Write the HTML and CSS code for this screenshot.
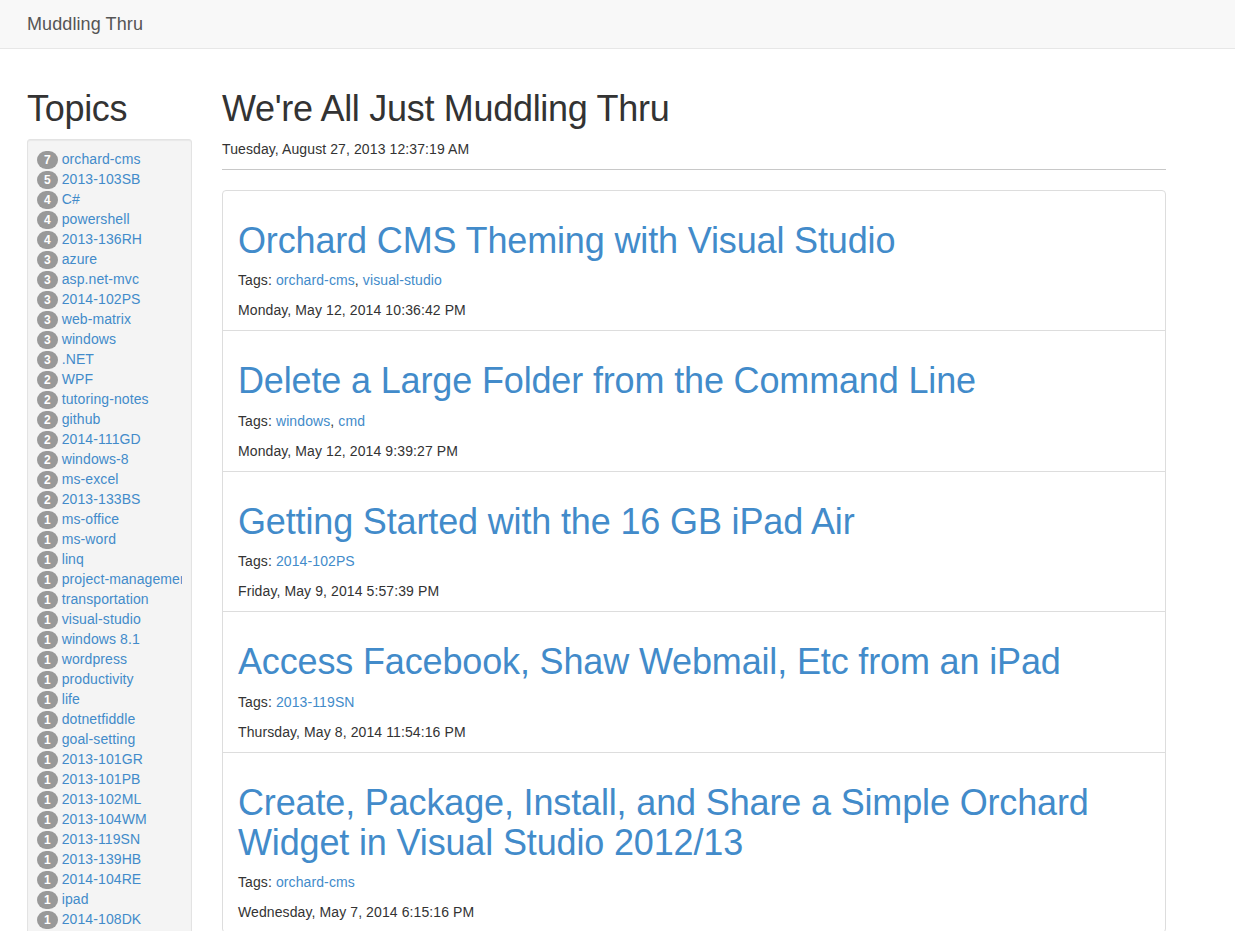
FILE: index.html
```html
<!DOCTYPE html>
<html lang="en">
<head>
<meta charset="utf-8">
<title>Muddling Thru</title>
<link rel="stylesheet" href="styles.css">
</head>
<body>
<nav class="navbar">
  <a class="brand" href="#">Muddling Thru</a>
</nav>
<div class="page">
  <aside class="sidebar">
    <h1 class="heading">Topics</h1>
    <div class="well">
      <ul class="topics">
        <li><span class="badge">7</span> <a href="#">orchard-cms</a></li>
        <li><span class="badge">5</span> <a href="#">2013-103SB</a></li>
        <li><span class="badge">4</span> <a href="#">C#</a></li>
        <li><span class="badge">4</span> <a href="#">powershell</a></li>
        <li><span class="badge">4</span> <a href="#">2013-136RH</a></li>
        <li><span class="badge">3</span> <a href="#">azure</a></li>
        <li><span class="badge">3</span> <a href="#">asp.net-mvc</a></li>
        <li><span class="badge">3</span> <a href="#">2014-102PS</a></li>
        <li><span class="badge">3</span> <a href="#">web-matrix</a></li>
        <li><span class="badge">3</span> <a href="#">windows</a></li>
        <li><span class="badge">3</span> <a href="#">.NET</a></li>
        <li><span class="badge">2</span> <a href="#">WPF</a></li>
        <li><span class="badge">2</span> <a href="#">tutoring-notes</a></li>
        <li><span class="badge">2</span> <a href="#">github</a></li>
        <li><span class="badge">2</span> <a href="#">2014-111GD</a></li>
        <li><span class="badge">2</span> <a href="#">windows-8</a></li>
        <li><span class="badge">2</span> <a href="#">ms-excel</a></li>
        <li><span class="badge">2</span> <a href="#">2013-133BS</a></li>
        <li><span class="badge">1</span> <a href="#">ms-office</a></li>
        <li><span class="badge">1</span> <a href="#">ms-word</a></li>
        <li><span class="badge">1</span> <a href="#">linq</a></li>
        <li><span class="badge">1</span> <a href="#">project-management</a></li>
        <li><span class="badge">1</span> <a href="#">transportation</a></li>
        <li><span class="badge">1</span> <a href="#">visual-studio</a></li>
        <li><span class="badge">1</span> <a href="#">windows 8.1</a></li>
        <li><span class="badge">1</span> <a href="#">wordpress</a></li>
        <li><span class="badge">1</span> <a href="#">productivity</a></li>
        <li><span class="badge">1</span> <a href="#">life</a></li>
        <li><span class="badge">1</span> <a href="#">dotnetfiddle</a></li>
        <li><span class="badge">1</span> <a href="#">goal-setting</a></li>
        <li><span class="badge">1</span> <a href="#">2013-101GR</a></li>
        <li><span class="badge">1</span> <a href="#">2013-101PB</a></li>
        <li><span class="badge">1</span> <a href="#">2013-102ML</a></li>
        <li><span class="badge">1</span> <a href="#">2013-104WM</a></li>
        <li><span class="badge">1</span> <a href="#">2013-119SN</a></li>
        <li><span class="badge">1</span> <a href="#">2013-139HB</a></li>
        <li><span class="badge">1</span> <a href="#">2014-104RE</a></li>
        <li><span class="badge">1</span> <a href="#">ipad</a></li>
        <li><span class="badge">1</span> <a href="#">2014-108DK</a></li>
      </ul>
    </div>
  </aside>
  <main class="main">
    <h1 class="heading">We're All Just Muddling Thru</h1>
    <p class="meta">Tuesday, August 27, 2013 12:37:19 AM</p>
    <hr class="rule">
    <div class="panel">
      <article class="post">
        <h2 class="post-title"><a href="#">Orchard CMS Theming with Visual Studio</a></h2>
        <p class="meta">Tags: <a href="#">orchard-cms</a>, <a href="#">visual-studio</a></p>
        <p class="meta">Monday, May 12, 2014 10:36:42 PM</p>
      </article>
      <article class="post">
        <h2 class="post-title"><a href="#">Delete a Large Folder from the Command Line</a></h2>
        <p class="meta">Tags: <a href="#">windows</a>, <a href="#">cmd</a></p>
        <p class="meta">Monday, May 12, 2014 9:39:27 PM</p>
      </article>
      <article class="post">
        <h2 class="post-title"><a href="#">Getting Started with the 16 GB iPad Air</a></h2>
        <p class="meta">Tags: <a href="#">2014-102PS</a></p>
        <p class="meta">Friday, May 9, 2014 5:57:39 PM</p>
      </article>
      <article class="post">
        <h2 class="post-title"><a href="#">Access Facebook, Shaw Webmail, Etc from an iPad</a></h2>
        <p class="meta">Tags: <a href="#">2013-119SN</a></p>
        <p class="meta">Thursday, May 8, 2014 11:54:16 PM</p>
      </article>
      <article class="post">
        <h2 class="post-title"><a href="#">Create, Package, Install, and Share a Simple Orchard Widget in Visual Studio 2012/13</a></h2>
        <p class="meta">Tags: <a href="#">orchard-cms</a></p>
        <p class="meta">Wednesday, May 7, 2014 6:15:16 PM</p>
      </article>
    </div>
  </main>
</div>
</body>
</html>
```

FILE: styles.css
```css
* { box-sizing: border-box; }

html, body {
  margin: 0;
  padding: 0;
}

body {
  font-family: "Liberation Sans", Arial, sans-serif;
  font-size: 14px;
  line-height: 20px;
  letter-spacing: 0.1px;
  color: #333;
  background: #fff;
}

a {
  color: #428bca;
  text-decoration: none;
}

.navbar {
  height: 49px;
  background: #f8f8f8;
  border-bottom: 1px solid #e7e7e7;
  display: flex;
  align-items: center;
  padding-left: 27px;
}

.brand {
  color: #555;
  font-size: 18px;
  line-height: 20px;
}

.page {
  display: flex;
  gap: 30px;
  padding: 20px 0 0 27px;
}

.sidebar {
  width: 165px;
  flex: none;
}

.main {
  width: 944px;
  flex: none;
}

.heading {
  font-size: 36px;
  font-weight: 500;
  line-height: 1.1;
  letter-spacing: -0.3px;
  margin: 20px 0 10px;
  color: #333;
}

.well {
  background: #f4f4f4;
  border: 1px solid #e3e3e3;
  border-radius: 3px;
  box-shadow: inset 0 1px 1px rgba(0, 0, 0, 0.05);
  padding: 9px;
}

.topics {
  list-style: none;
  margin: 0;
  padding: 0;
}

.topics li {
  white-space: nowrap;
  overflow: hidden;
  height: 20px;
}

.badge {
  display: inline-block;
  min-width: 10px;
  padding: 3px 7px;
  font-size: 12px;
  font-weight: bold;
  line-height: 1;
  letter-spacing: 0;
  color: #fff;
  text-align: center;
  vertical-align: baseline;
  background: #999;
  border-radius: 10px;
}

.meta {
  margin: 0 0 10px;
}

.rule {
  border: 0;
  border-top: 1px solid #c8c8c8;
  margin: 0 0 20px;
  padding: 0;
  height: 0;
}

.panel {
  border: 1px solid #ddd;
  border-radius: 4px;
  background: #fff;
}

.post {
  padding: 10px 15px 0;
  border-top: 1px solid #ddd;
}

.post:first-child {
  border-top: 0;
}

.post-title {
  font-size: 36px;
  font-weight: 500;
  line-height: 1.1;
  letter-spacing: -0.15px;
  margin: 20px 0 10px;
}
```
